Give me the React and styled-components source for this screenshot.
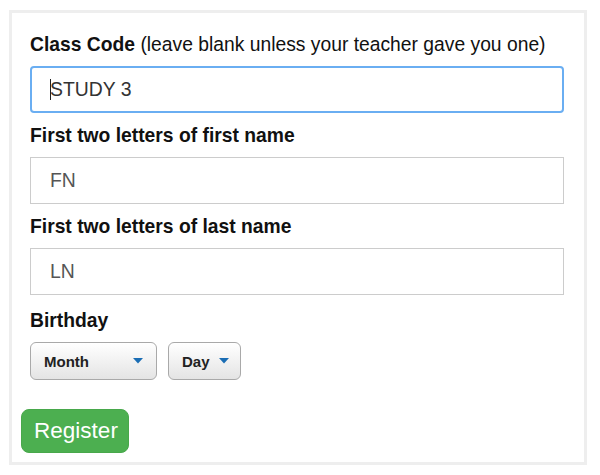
import React from "react";
import styled, { createGlobalStyle } from "styled-components";

const Global = createGlobalStyle`
  html, body { margin: 0; padding: 0; background: #ffffff; }
  body { font-family: "Liberation Sans", Arial, Helvetica, sans-serif; }
  * { box-sizing: border-box; }
`;

const Frame = styled.form`
  margin: 10px 0 0 9px;
  width: 578px;
  border: 3px solid #eeeeee;
  padding: 21px 20px 9px 18px;
  display: flex;
  flex-direction: column;
  align-items: stretch;
`;

const Field = styled.div`
  display: flex;
  flex-direction: column;
  margin-top: ${(p) => p.$offset || 0}px;
`;

const Label = styled.label`
  font-size: 19.3px;
  line-height: 22px;
  font-weight: bold;
  color: #111;
  margin-bottom: 10px;
  white-space: nowrap;
`;

const Note = styled.span`
  font-weight: normal;
`;

const InputWrap = styled.div`
  position: relative;
  margin-bottom: 12px;
`;

const TextInput = styled.input`
  display: block;
  width: 100%;
  height: 47px;
  margin: 0;
  font-family: "Liberation Sans", Arial, Helvetica, sans-serif;
  font-size: 19.4px;
  background: #fff;
  outline: none;
  color: ${(p) => (p.$focused ? "#333" : "#555")};
  border: ${(p) => (p.$focused ? "2px solid #6aaef2" : "1px solid #cccccc")};
  border-radius: ${(p) => (p.$focused ? "4px" : "0")};
  padding: ${(p) => (p.$focused ? "0 18px" : "0 19px")};
`;

const Caret = styled.span`
  position: absolute;
  left: 20px;
  top: 13px;
  width: 1px;
  height: 21px;
  background: #222;
`;

const SelectRow = styled.div`
  display: flex;
  gap: 11px;
`;

const SelectBox = styled.div`
  height: 38px;
  width: ${(p) => p.$width}px;
  display: flex;
  align-items: center;
  justify-content: space-between;
  padding: 0 ${(p) => p.$right}px 0 13px;
  border: 1px solid #a9a9a9;
  border-radius: 6px;
  background: linear-gradient(#ffffff, #e4e4e4);
  font-size: 15px;
  font-weight: bold;
  color: #222;
`;

const Arrow = styled.svg`
  width: 10px;
  height: 6px;
  display: block;
  margin-top: -1px;
`;

const RegisterButton = styled.button`
  margin: 29px 0 0 -9px;
  align-self: flex-start;
  width: 108px;
  height: 44px;
  border: 1px solid #48a84b;
  border-radius: 8px;
  background: #4caf50;
  color: #fff;
  font-family: "Liberation Sans", Arial, Helvetica, sans-serif;
  font-size: 22.5px;
  padding: 0 0 0 2px;
  text-align: center;
`;

const Select = ({ label, width, right }) => (
  <SelectBox $width={width} $right={right}>
    <span>{label}</span>
    <Arrow viewBox="0 0 10 6">
      <path d="M0 0 L10 0 L5 5.5 Z" fill="#1a6db4" />
    </Arrow>
  </SelectBox>
);

export default function App() {
  return (
    <>
      <Global />
      <Frame onSubmit={(e) => e.preventDefault()}>
        <Field>
          <Label>
            Class Code <Note>(leave blank unless your teacher gave you one)</Note>
          </Label>
          <InputWrap>
            <TextInput $focused readOnly value="STUDY 3" />
            <Caret />
          </InputWrap>
        </Field>
        <Field>
          <Label>First two letters of first name</Label>
          <InputWrap>
            <TextInput readOnly value="FN" />
          </InputWrap>
        </Field>
        <Field>
          <Label>First two letters of last name</Label>
          <InputWrap>
            <TextInput readOnly value="LN" />
          </InputWrap>
        </Field>
        <Field $offset={3}>
          <Label>Birthday</Label>
          <SelectRow>
            <Select label="Month" width={127} right={13} />
            <Select label="Day" width={73} right={11} />
          </SelectRow>
        </Field>
        <RegisterButton type="button">Register</RegisterButton>
      </Frame>
    </>
  );
}
